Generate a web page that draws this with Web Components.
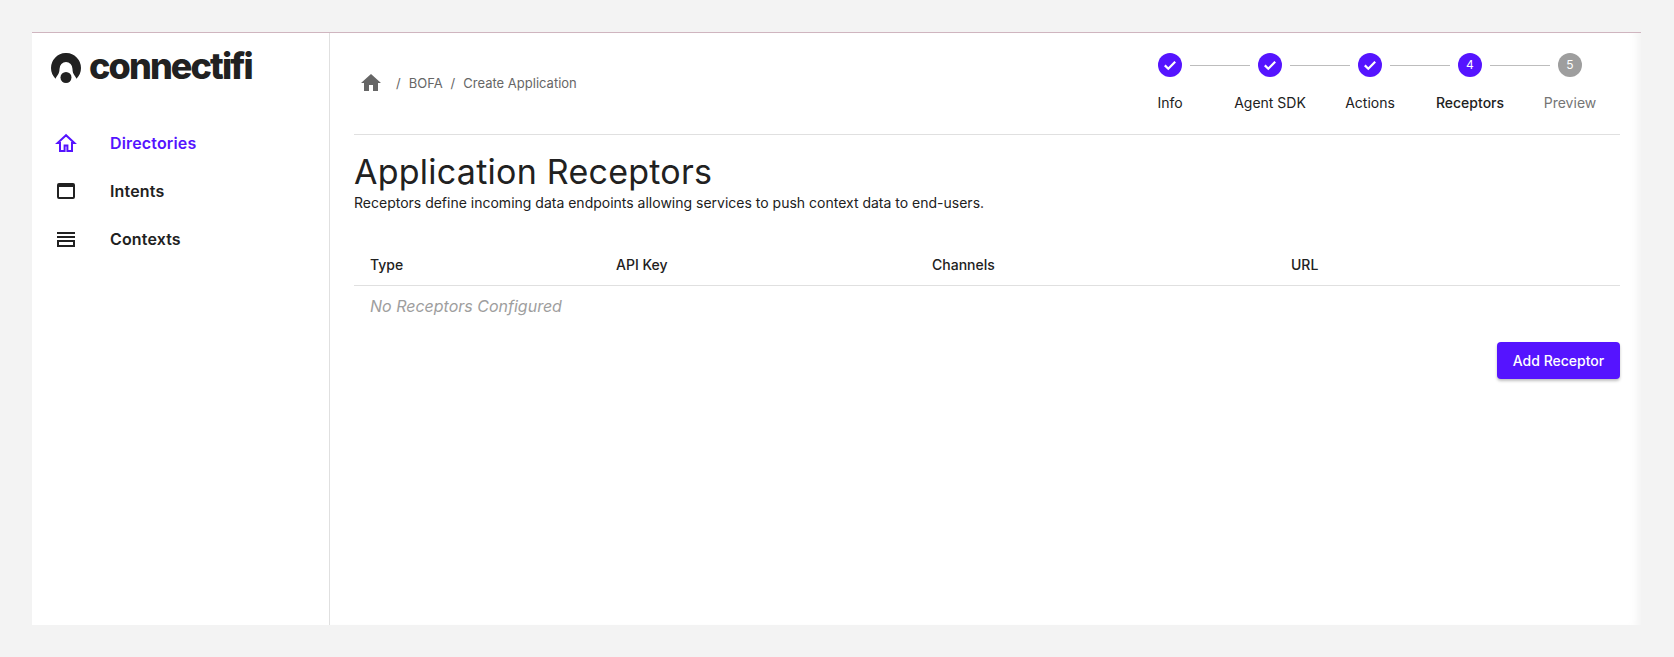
<!DOCTYPE html>
<html>
<head>
<meta charset="utf-8">
<style>
html, body { margin: 0; height: 100%; }
body { background: #f3f3f3; font-family: Inter, "Liberation Sans", sans-serif; color: #212121; }
</style>
</head>
<body>
<app-shell>
    <side-bar slot="side">
        <nav-item active label="Directories" icon="home"></nav-item>
        <nav-item label="Intents" icon="window"></nav-item>
        <nav-item label="Contexts" icon="lines"></nav-item>
    </side-bar>
    <page-header>
        <bread-crumbs slot="crumbs"></bread-crumbs>
        <step-bar slot="steps"></step-bar>
    </page-header>
    <h-title>Application Receptors
        <span slot="sub">Receptors define incoming data endpoints allowing services to push context data to end-users.</span>
    </h-title>
    <receptor-table></receptor-table>
</app-shell>

<script>
const shellTemplate = document.createElement('template');
shellTemplate.innerHTML = `
<style>
:host {
    display: grid;
    grid-template-columns: 297px 1fr;
    box-sizing: border-box;
    position: fixed;
    left: 32px;
    top: 32px;
    width: 1609px;
    height: 593px;
    background: #fff;
    border-top: 1px solid #cfb5bf;
}
.main {
    border-left: 1px solid #e0e0e0;
    padding: 0 21px 0 24px;
    min-width: 0;
    box-shadow: inset -10px 0 10px -6px rgba(0,0,0,.05);
}
</style>
<slot name="side"></slot>
<div class="main"><slot></slot></div>
`;
class AppShell extends HTMLElement {
    constructor() {
        super();
        this.attachShadow({mode: 'open'}).appendChild(shellTemplate.content.cloneNode(true));
    }
}
customElements.define('app-shell', AppShell);

const sideTemplate = document.createElement('template');
sideTemplate.innerHTML = `
<style>
:host { display: block; }
.logo {
    display: flex;
    align-items: center;
    gap: 8px;
    padding: 20px 0 0 19px;
    height: 31px;
    margin-bottom: 35px;
}
.word {
    font: 800 36px/31px Inter, sans-serif;
    font-variant-ligatures: none;
    letter-spacing: -1.9px;
    color: #212121;
    position: relative;
    top: -2px;
}
</style>
<div class="logo">
    <svg width="30" height="31" viewBox="0 0 30 31">
        <path d="M4.5 25.7A15 15 0 1 1 25.5 25.7C24 22.5 21.5 21 21.5 16A6.5 7 0 0 0 8.5 16C8.5 21 6 22.5 4.5 25.7Z" fill="#212121"/>
        <circle cx="15" cy="24.5" r="5.5" fill="#212121"/>
    </svg>
    <span class="word">connectifi</span>
</div>
<slot></slot>
`;
class SideBar extends HTMLElement {
    constructor() {
        super();
        this.attachShadow({mode: 'open'}).appendChild(sideTemplate.content.cloneNode(true));
    }
}
customElements.define('side-bar', SideBar);

const navIcons = {
    home: `<path d="M12 4.2 3.6 12H6v8h4.6v-5.4h2.8V20H18v-8h2.4Z" fill="none" stroke="currentColor" stroke-width="2"/>`,
    window: `<path d="M5 4h14a2 2 0 0 1 2 2v12a2 2 0 0 1-2 2H5a2 2 0 0 1-2-2V6a2 2 0 0 1 2-2Zm0 4v10h14V8Z" fill="currentColor" fill-rule="evenodd"/>`,
    lines: `<path d="M3 5h18v2H3ZM3 9h18v2H3ZM3 13h18v7H3Zm2 2v3h14v-3Z" fill="currentColor" fill-rule="evenodd"/>`
};

class NavItem extends HTMLElement {
    constructor() {
        super();
        const shadowRoot = this.attachShadow({mode: 'open'});
        shadowRoot.innerHTML = `
        <style>
        :host {
            display: flex;
            align-items: center;
            height: 48px;
            padding-left: 22px;
            color: #212121;
            font: 600 16px/24px Inter, sans-serif;
            letter-spacing: .15px;
        }
        :host([active]) { color: #5514ff; }
        svg { width: 24px; height: 24px; margin-right: 32px; flex: none; }
        </style>
        <svg viewBox="0 0 24 24">${navIcons[this.getAttribute('icon')]}</svg>
        <span>${this.getAttribute('label')}</span>`;
    }
}
customElements.define('nav-item', NavItem);

const headerTemplate = document.createElement('template');
headerTemplate.innerHTML = `
<style>
:host {
    display: flex;
    justify-content: space-between;
    height: 102px;
    box-sizing: border-box;
    border-bottom: 1px solid #e0e0e0;
}
</style>
<slot name="crumbs"></slot>
<slot name="steps"></slot>
`;
class PageHeader extends HTMLElement {
    constructor() {
        super();
        this.attachShadow({mode: 'open'}).appendChild(headerTemplate.content.cloneNode(true));
    }
}
customElements.define('page-header', PageHeader);

const crumbTemplate = document.createElement('template');
crumbTemplate.innerHTML = `
<style>
:host {
    display: flex;
    align-items: center;
    height: 24px;
    margin-top: 38px;
    padding-left: 5px;
    color: #666;
    font: 400 13px/20px Inter, sans-serif;
}
svg { width: 24px; height: 24px; margin-right: 13px; }
span { margin-right: 8px; }
</style>
<svg viewBox="0 0 24 24"><path d="M10 20v-6h4v6h5v-8h3L12 3 2 12h3v8z" fill="#666"/></svg>
<span>/</span><span>BOFA</span><span>/</span><span>Create Application</span>
`;
class BreadCrumbs extends HTMLElement {
    constructor() {
        super();
        this.attachShadow({mode: 'open'}).appendChild(crumbTemplate.content.cloneNode(true));
    }
}
customElements.define('bread-crumbs', BreadCrumbs);

const steps = [
    {label: 'Info', state: 'done'},
    {label: 'Agent SDK', state: 'done'},
    {label: 'Actions', state: 'done'},
    {label: 'Receptors', state: 'active', n: 4},
    {label: 'Preview', state: 'todo', n: 5}
];

class StepBar extends HTMLElement {
    constructor() {
        super();
        const shadowRoot = this.attachShadow({mode: 'open'});
        const items = steps.map((step, i) => `
            <div class="step ${step.state}">
                ${i > 0 ? '<i class="line"></i>' : ''}
                <div class="dot">${step.n ? step.n : '<svg width="24" height="24" viewBox="0 0 24 24"><path d="M6.8 12.4l3.5 3.4 6.9-7" fill="none" stroke="#fff" stroke-width="2.2"/></svg>'}</div>
                <div class="label">${step.label}</div>
            </div>`).join('');
        shadowRoot.innerHTML = `
        <style>
        :host { display: flex; padding-top: 20px; margin-right: 0; }
        .step {
            position: relative;
            width: 100px;
            display: flex;
            flex-direction: column;
            align-items: center;
        }
        .dot {
            width: 24px;
            height: 24px;
            border-radius: 50%;
            background: #5514ff;
            color: #fff;
            font: 400 12px/24px Inter, sans-serif;
            text-align: center;
        }
        .dot svg { display: block; }
        .todo .dot { background: #9e9e9e; }
        .line {
            position: absolute;
            left: -30px;
            top: 12px;
            width: 60px;
            height: 1px;
            background: #bdbdbd;
        }
        .label {
            margin-top: 16px;
            font: 400 14px/20px Inter, sans-serif;
            color: #212121;
            white-space: nowrap;
        }
        .active .label { font-weight: 500; }
        .todo .label { color: #757575; }
        </style>
        ${items}`;
    }
}
customElements.define('step-bar', StepBar);

const titleTemplate = document.createElement('template');
titleTemplate.innerHTML = `
<style>
:host { display: block; padding-top: 16px; }
h1 { margin: 0; font: 400 34px/42px Inter, sans-serif; letter-spacing: .25px; color: #212121; }
p { margin: 0; font: 400 14px/20px Inter, sans-serif; color: #212121; }
</style>
<h1><slot></slot></h1>
<p><slot name="sub"></slot></p>
`;
class HTitle extends HTMLElement {
    constructor() {
        super();
        this.attachShadow({mode: 'open'}).appendChild(titleTemplate.content.cloneNode(true));
    }
}
customElements.define('h-title', HTitle);

const tableTemplate = document.createElement('template');
tableTemplate.innerHTML = `
<style>
:host { display: block; margin-top: 24px; font: 400 14px/20px Inter, sans-serif; color: #212121; }
.row {
    display: grid;
    grid-template-columns: 246px 316px 359px 1fr;
    padding: 0 16px;
}
.head {
    height: 49px;
    padding-top: 7px;
    align-items: center;
    font-weight: 450;
    border-bottom: 1px solid #e0e0e0;
    box-sizing: border-box;
}
.empty {
    padding: 8px 16px;
    font-size: 16px;
    line-height: 24px;
    font-style: italic;
    color: #9e9e9e;
}
.actions { display: flex; justify-content: flex-end; margin-top: 16px; }
button {
    width: 123px;
    height: 37px;
    border: none;
    border-radius: 4px;
    background: #5514ff;
    color: #fff;
    font: 450 14px/20px Inter, sans-serif;
    box-shadow: 0 2px 3px rgba(0,0,0,.25);
}
</style>
<div class="row head"><span>Type</span><span>API Key</span><span>Channels</span><span>URL</span></div>
<div class="empty">No Receptors Configured</div>
<div class="actions"><button>Add Receptor</button></div>
`;
class ReceptorTable extends HTMLElement {
    constructor() {
        super();
        this.attachShadow({mode: 'open'}).appendChild(tableTemplate.content.cloneNode(true));
    }
}
customElements.define('receptor-table', ReceptorTable);
</script>
</body>
</html>
